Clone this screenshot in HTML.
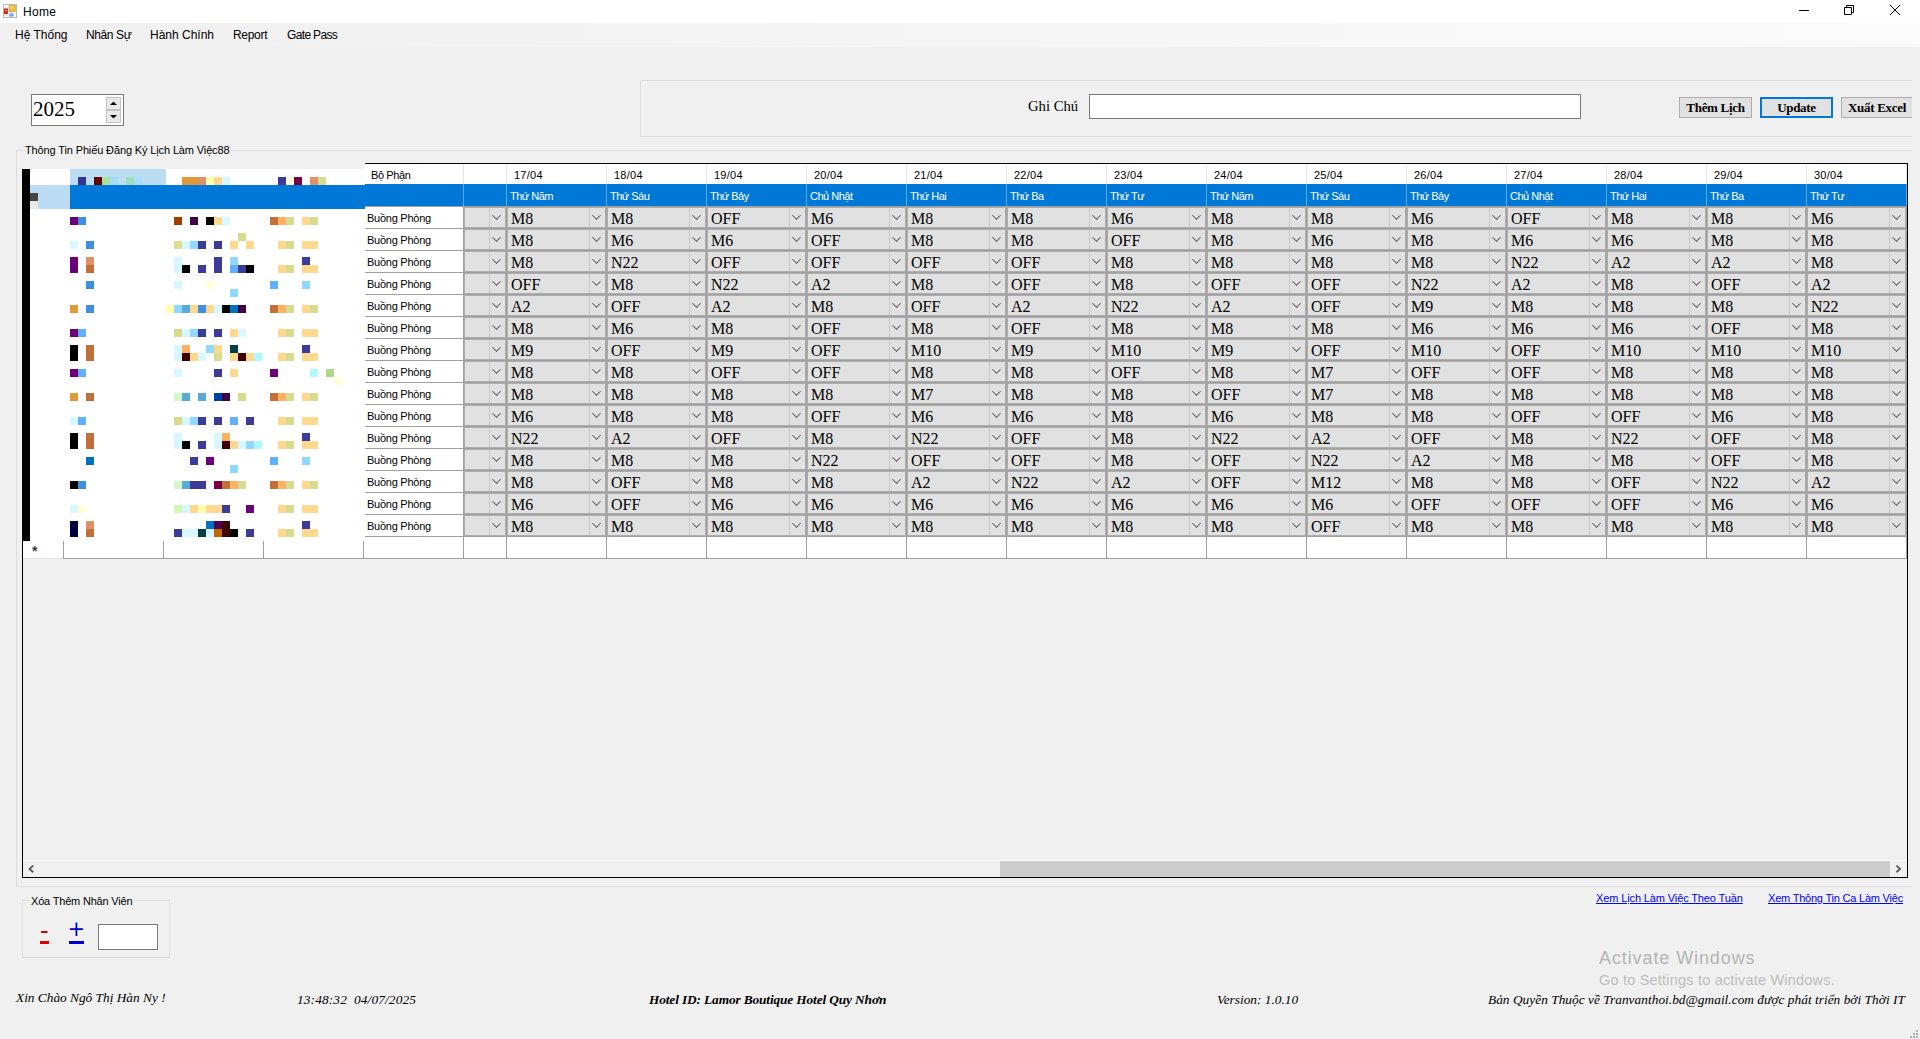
<!DOCTYPE html>
<html lang="vi"><head><meta charset="utf-8"><title>Home</title>
<style>
html,body{margin:0;padding:0}
body{width:1920px;height:1039px;background:#f0f0f0;position:relative;overflow:hidden;font-family:"Liberation Sans",sans-serif;font-size:11px;color:#000;line-height:1}
div,span,b,i,a{box-sizing:border-box}
.a{position:absolute;white-space:nowrap}
#title{position:absolute;left:0;top:0;width:1920px;height:23px;background:#fff}
#title .t{position:absolute;left:23px;top:6px;font-size:12px;}
#menu{position:absolute;left:0;top:23px;width:1920px;height:24px;background:linear-gradient(to right,#f0f0f0,#fbfbfb)}
#menu span{position:absolute;top:6px;font-size:12px;white-space:nowrap}
.ser{font-family:"Liberation Serif",serif}
.gb{position:absolute;border:1px solid #dcdcdc}
.gbc{position:absolute;background:#f0f0f0;font-size:11px;white-space:nowrap;padding:0 2px}
.tb{position:absolute;background:#fff;border:1px solid #7a7a7a}
.btn{position:absolute;background:#e1e1e1;border:1px solid #adadad;font-family:"Liberation Serif",serif;font-weight:bold;font-size:13px;text-align:center;white-space:nowrap;letter-spacing:-0.3px}
/* grid */
#grid{position:absolute;left:0;top:0;width:1920px;height:1039px}
#frame{left:22px;top:163px;width:1886px;height:715px;border:1px solid #000}
#grid>div{position:absolute}
.hdr{top:164px;height:20px;background:#fff;border-right:1px solid #e5e5e5;font-size:11px;padding:6px 0 0 7px;white-space:nowrap}
.sel{top:184px;height:23px;background:#0078d7;border-bottom:1px solid #a0a0a0}
.selv{top:184px;width:1px;height:22px;background:#5aa7e6}
.selt{top:185px;height:21px;color:#fff;font-size:11px;padding:6px 0 0 3px;white-space:nowrap;letter-spacing:-.5px}
.row{left:23px;width:1884px;height:22px;border-bottom:1px solid #a0a0a0;background:#fff}
.row>div{position:absolute;top:0;height:21px}
.bp{left:341px;width:100px;border-right:1px solid #a0a0a0;font-size:11px;padding:6px 0 0 3px;white-space:nowrap;letter-spacing:-.25px}
.c{width:99px;background:#e1e1e1;border:1px solid #adadad;font-family:"Liberation Serif",serif;font-size:16px;padding:3px 0 0 3px;white-space:nowrap;box-shadow:1px 0 0 #a0a0a0}
.c0{left:441px;width:42px}
.c::before{content:"";position:absolute;right:15px;top:0;width:1px;height:19px;background:#c9c9c9}
.c::after{content:"";position:absolute;right:5px;top:4px;width:6px;height:6px;border-right:1px solid #444;border-bottom:1px solid #444;transform:rotate(45deg) scale(.88)}
.newrow{left:23px;top:537px;width:1884px;height:22px;background:#fff;border-bottom:1px solid #a0a0a0}
.newrow i{position:absolute;top:0;width:1px;height:21px;background:#a0a0a0}
.star{position:absolute;left:9px;top:7px;font-size:14px;font-weight:bold;color:#3a3a3a}
#mosaic{left:22px;top:169px;width:343px;height:372px;background:#fff;overflow:hidden}
#mosaic b{position:absolute;display:block}
.lnk{position:absolute;color:#0000ff;text-decoration:underline;font-size:11px;white-space:nowrap}
.st{position:absolute;font-family:"Liberation Serif",serif;font-style:italic;font-size:13.33px;white-space:nowrap}
.mtop{left:22px;top:161px;width:343px;height:8px;background:#f0f0f0}

</style></head>
<body>
<div id="title">
<svg class="a" style="left:3px;top:4px" width="14" height="14" viewBox="0 0 14 14"><rect x="0.5" y="0.5" width="13" height="13" fill="#fff" stroke="#b8b8b8"/><path d="M5.6 1V13M5.6 8.6H13M1 11.4H5.6M1 4H5.6" stroke="#dcdcdc" stroke-width="0.8" fill="none"/><rect x="1" y="4.5" width="3.9" height="5.6" fill="#c8281e"/><rect x="2.2" y="5.8" width="1.4" height="1.5" fill="#f7b8a8"/><rect x="6.5" y="1.4" width="5.8" height="6.2" fill="#f0be2c" stroke="#c99c24" stroke-width="0.6"/><rect x="7.3" y="2.2" width="3" height="2.4" fill="#f9dc6a"/><rect x="6.5" y="9.5" width="4" height="3" fill="#4f8fe6"/><rect x="7.2" y="10.2" width="2.6" height="1.3" fill="#8cb8f0"/></svg>
<span class="t" style="letter-spacing:.3px">Home</span>
<svg class="a" style="left:1799px;top:5px" width="102" height="11" viewBox="0 0 102 11"><path d="M0 5.5H10" stroke="#000" fill="none"/><path d="M45.5 2.5H52.5V9.5H45.5ZM47.5 2.5V0.5H54.5V7.5H52.5" stroke="#000" fill="none"/><path d="M91 0L101 10M101 0L91 10" stroke="#000" fill="none"/></svg>
</div>
<div id="menu"><span style="left:15px">Hệ Thống</span><span style="left:86px;letter-spacing:-.4px">Nhân Sự</span><span style="left:150px">Hành Chính</span><span style="left:233px;letter-spacing:-.3px">Report</span><span style="left:287px;letter-spacing:-.65px">Gate Pass</span></div>
<div class="tb" style="left:31px;top:94px;width:93px;height:32px"><span class="a ser" style="left:1px;top:4px;font-size:21px">2025</span>
<div class="a" style="left:74px;top:2px;width:15px;height:13px;background:#e9e9e9;border:1px solid #c4c4c4"></div><div class="a" style="left:74px;top:15px;width:15px;height:13px;background:#e9e9e9;border:1px solid #c4c4c4"></div>
<svg class="a" style="left:78px;top:6px" width="7" height="18" viewBox="0 0 7 18"><path d="M0 4L3.5 0.5L7 4Z M0 14L3.5 17.5L7 14Z" fill="#000"/></svg></div>
<div class="gb" style="left:640px;top:80px;width:1272px;height:57px;border-right:0"></div>
<span class="a ser" style="left:1028px;top:99px;font-size:14.67px">Ghi Chú</span>
<div class="tb" style="left:1089px;top:94px;width:492px;height:25px"></div>
<div class="btn" style="left:1679px;top:97px;width:73px;height:21px;padding-top:3px">Thêm Lịch</div>
<div class="btn" style="left:1760px;top:97px;width:73px;height:21px;padding-top:2px;border:2px solid #0078d7">Update</div>
<div class="btn" style="left:1841px;top:97px;width:71px;height:21px;padding-top:3px;border-right:0">Xuất Excel</div>
<div class="gb" style="left:16px;top:150px;width:1896px;height:737px;border-right:0"></div>
<span class="gbc" style="left:23px;top:145px;letter-spacing:-.13px">Thông Tin Phiếu Đăng Ký Lịch Làm Việc88</span>
<div id="grid">
<div id="frame"></div>
<div class="hdr" style="left:365px;width:99px;padding-left:6px;letter-spacing:-.4px">Bộ Phận</div><div class="hdr" style="left:464px;width:43px"></div><div class="hdr" style="left:507px;width:100px;letter-spacing:.25px">17/04</div><div class="hdr" style="left:607px;width:100px;letter-spacing:.25px">18/04</div><div class="hdr" style="left:707px;width:100px;letter-spacing:.25px">19/04</div><div class="hdr" style="left:807px;width:100px;letter-spacing:.25px">20/04</div><div class="hdr" style="left:907px;width:100px;letter-spacing:.25px">21/04</div><div class="hdr" style="left:1007px;width:100px;letter-spacing:.25px">22/04</div><div class="hdr" style="left:1107px;width:100px;letter-spacing:.25px">23/04</div><div class="hdr" style="left:1207px;width:100px;letter-spacing:.25px">24/04</div><div class="hdr" style="left:1307px;width:100px;letter-spacing:.25px">25/04</div><div class="hdr" style="left:1407px;width:100px;letter-spacing:.25px">26/04</div><div class="hdr" style="left:1507px;width:100px;letter-spacing:.25px">27/04</div><div class="hdr" style="left:1607px;width:100px;letter-spacing:.25px">28/04</div><div class="hdr" style="left:1707px;width:100px;letter-spacing:.25px">29/04</div><div class="hdr" style="left:1807px;width:100px;letter-spacing:.25px">30/04</div>
<div class="sel" style="left:23px;width:1884px"></div><div class="selv" style="left:463px"></div><div class="selv" style="left:506px"></div><div class="selt" style="left:507px">Thứ Năm</div><div class="selv" style="left:606px"></div><div class="selt" style="left:607px">Thứ Sáu</div><div class="selv" style="left:706px"></div><div class="selt" style="left:707px">Thứ Bảy</div><div class="selv" style="left:806px"></div><div class="selt" style="left:807px">Chủ Nhật</div><div class="selv" style="left:906px"></div><div class="selt" style="left:907px">Thứ Hai</div><div class="selv" style="left:1006px"></div><div class="selt" style="left:1007px">Thứ Ba</div><div class="selv" style="left:1106px"></div><div class="selt" style="left:1107px">Thứ Tư</div><div class="selv" style="left:1206px"></div><div class="selt" style="left:1207px">Thứ Năm</div><div class="selv" style="left:1306px"></div><div class="selt" style="left:1307px">Thứ Sáu</div><div class="selv" style="left:1406px"></div><div class="selt" style="left:1407px">Thứ Bảy</div><div class="selv" style="left:1506px"></div><div class="selt" style="left:1507px">Chủ Nhật</div><div class="selv" style="left:1606px"></div><div class="selt" style="left:1607px">Thứ Hai</div><div class="selv" style="left:1706px"></div><div class="selt" style="left:1707px">Thứ Ba</div><div class="selv" style="left:1806px"></div><div class="selt" style="left:1807px">Thứ Tư</div><div class="selv" style="left:1906px"></div>
<div class="row" style="top:207px"><div class="bp">Buồng Phòng</div><div class="c c0"></div><div class="c" style="left:484px">M8</div><div class="c" style="left:584px">M8</div><div class="c" style="left:684px">OFF</div><div class="c" style="left:784px">M6</div><div class="c" style="left:884px">M8</div><div class="c" style="left:984px">M8</div><div class="c" style="left:1084px">M6</div><div class="c" style="left:1184px">M8</div><div class="c" style="left:1284px">M8</div><div class="c" style="left:1384px">M6</div><div class="c" style="left:1484px">OFF</div><div class="c" style="left:1584px">M8</div><div class="c" style="left:1684px">M8</div><div class="c" style="left:1784px">M6</div></div>
<div class="row" style="top:229px"><div class="bp">Buồng Phòng</div><div class="c c0"></div><div class="c" style="left:484px">M8</div><div class="c" style="left:584px">M6</div><div class="c" style="left:684px">M6</div><div class="c" style="left:784px">OFF</div><div class="c" style="left:884px">M8</div><div class="c" style="left:984px">M8</div><div class="c" style="left:1084px">OFF</div><div class="c" style="left:1184px">M8</div><div class="c" style="left:1284px">M6</div><div class="c" style="left:1384px">M8</div><div class="c" style="left:1484px">M6</div><div class="c" style="left:1584px">M6</div><div class="c" style="left:1684px">M8</div><div class="c" style="left:1784px">M8</div></div>
<div class="row" style="top:251px"><div class="bp">Buồng Phòng</div><div class="c c0"></div><div class="c" style="left:484px">M8</div><div class="c" style="left:584px">N22</div><div class="c" style="left:684px">OFF</div><div class="c" style="left:784px">OFF</div><div class="c" style="left:884px">OFF</div><div class="c" style="left:984px">OFF</div><div class="c" style="left:1084px">M8</div><div class="c" style="left:1184px">M8</div><div class="c" style="left:1284px">M8</div><div class="c" style="left:1384px">M8</div><div class="c" style="left:1484px">N22</div><div class="c" style="left:1584px">A2</div><div class="c" style="left:1684px">A2</div><div class="c" style="left:1784px">M8</div></div>
<div class="row" style="top:273px"><div class="bp">Buồng Phòng</div><div class="c c0"></div><div class="c" style="left:484px">OFF</div><div class="c" style="left:584px">M8</div><div class="c" style="left:684px">N22</div><div class="c" style="left:784px">A2</div><div class="c" style="left:884px">M8</div><div class="c" style="left:984px">OFF</div><div class="c" style="left:1084px">M8</div><div class="c" style="left:1184px">OFF</div><div class="c" style="left:1284px">OFF</div><div class="c" style="left:1384px">N22</div><div class="c" style="left:1484px">A2</div><div class="c" style="left:1584px">M8</div><div class="c" style="left:1684px">OFF</div><div class="c" style="left:1784px">A2</div></div>
<div class="row" style="top:295px"><div class="bp">Buồng Phòng</div><div class="c c0"></div><div class="c" style="left:484px">A2</div><div class="c" style="left:584px">OFF</div><div class="c" style="left:684px">A2</div><div class="c" style="left:784px">M8</div><div class="c" style="left:884px">OFF</div><div class="c" style="left:984px">A2</div><div class="c" style="left:1084px">N22</div><div class="c" style="left:1184px">A2</div><div class="c" style="left:1284px">OFF</div><div class="c" style="left:1384px">M9</div><div class="c" style="left:1484px">M8</div><div class="c" style="left:1584px">M8</div><div class="c" style="left:1684px">M8</div><div class="c" style="left:1784px">N22</div></div>
<div class="row" style="top:317px"><div class="bp">Buồng Phòng</div><div class="c c0"></div><div class="c" style="left:484px">M8</div><div class="c" style="left:584px">M6</div><div class="c" style="left:684px">M8</div><div class="c" style="left:784px">OFF</div><div class="c" style="left:884px">M8</div><div class="c" style="left:984px">OFF</div><div class="c" style="left:1084px">M8</div><div class="c" style="left:1184px">M8</div><div class="c" style="left:1284px">M8</div><div class="c" style="left:1384px">M6</div><div class="c" style="left:1484px">M6</div><div class="c" style="left:1584px">M6</div><div class="c" style="left:1684px">OFF</div><div class="c" style="left:1784px">M8</div></div>
<div class="row" style="top:339px"><div class="bp">Buồng Phòng</div><div class="c c0"></div><div class="c" style="left:484px">M9</div><div class="c" style="left:584px">OFF</div><div class="c" style="left:684px">M9</div><div class="c" style="left:784px">OFF</div><div class="c" style="left:884px">M10</div><div class="c" style="left:984px">M9</div><div class="c" style="left:1084px">M10</div><div class="c" style="left:1184px">M9</div><div class="c" style="left:1284px">OFF</div><div class="c" style="left:1384px">M10</div><div class="c" style="left:1484px">OFF</div><div class="c" style="left:1584px">M10</div><div class="c" style="left:1684px">M10</div><div class="c" style="left:1784px">M10</div></div>
<div class="row" style="top:361px"><div class="bp">Buồng Phòng</div><div class="c c0"></div><div class="c" style="left:484px">M8</div><div class="c" style="left:584px">M8</div><div class="c" style="left:684px">OFF</div><div class="c" style="left:784px">OFF</div><div class="c" style="left:884px">M8</div><div class="c" style="left:984px">M8</div><div class="c" style="left:1084px">OFF</div><div class="c" style="left:1184px">M8</div><div class="c" style="left:1284px">M7</div><div class="c" style="left:1384px">OFF</div><div class="c" style="left:1484px">OFF</div><div class="c" style="left:1584px">M8</div><div class="c" style="left:1684px">M8</div><div class="c" style="left:1784px">M8</div></div>
<div class="row" style="top:383px"><div class="bp">Buồng Phòng</div><div class="c c0"></div><div class="c" style="left:484px">M8</div><div class="c" style="left:584px">M8</div><div class="c" style="left:684px">M8</div><div class="c" style="left:784px">M8</div><div class="c" style="left:884px">M7</div><div class="c" style="left:984px">M8</div><div class="c" style="left:1084px">M8</div><div class="c" style="left:1184px">OFF</div><div class="c" style="left:1284px">M7</div><div class="c" style="left:1384px">M8</div><div class="c" style="left:1484px">M8</div><div class="c" style="left:1584px">M8</div><div class="c" style="left:1684px">M8</div><div class="c" style="left:1784px">M8</div></div>
<div class="row" style="top:405px"><div class="bp">Buồng Phòng</div><div class="c c0"></div><div class="c" style="left:484px">M6</div><div class="c" style="left:584px">M8</div><div class="c" style="left:684px">M8</div><div class="c" style="left:784px">OFF</div><div class="c" style="left:884px">M6</div><div class="c" style="left:984px">M6</div><div class="c" style="left:1084px">M8</div><div class="c" style="left:1184px">M6</div><div class="c" style="left:1284px">M8</div><div class="c" style="left:1384px">M8</div><div class="c" style="left:1484px">OFF</div><div class="c" style="left:1584px">OFF</div><div class="c" style="left:1684px">M6</div><div class="c" style="left:1784px">M8</div></div>
<div class="row" style="top:427px"><div class="bp">Buồng Phòng</div><div class="c c0"></div><div class="c" style="left:484px">N22</div><div class="c" style="left:584px">A2</div><div class="c" style="left:684px">OFF</div><div class="c" style="left:784px">M8</div><div class="c" style="left:884px">N22</div><div class="c" style="left:984px">OFF</div><div class="c" style="left:1084px">M8</div><div class="c" style="left:1184px">N22</div><div class="c" style="left:1284px">A2</div><div class="c" style="left:1384px">OFF</div><div class="c" style="left:1484px">M8</div><div class="c" style="left:1584px">N22</div><div class="c" style="left:1684px">OFF</div><div class="c" style="left:1784px">M8</div></div>
<div class="row" style="top:449px"><div class="bp">Buồng Phòng</div><div class="c c0"></div><div class="c" style="left:484px">M8</div><div class="c" style="left:584px">M8</div><div class="c" style="left:684px">M8</div><div class="c" style="left:784px">N22</div><div class="c" style="left:884px">OFF</div><div class="c" style="left:984px">OFF</div><div class="c" style="left:1084px">M8</div><div class="c" style="left:1184px">OFF</div><div class="c" style="left:1284px">N22</div><div class="c" style="left:1384px">A2</div><div class="c" style="left:1484px">M8</div><div class="c" style="left:1584px">M8</div><div class="c" style="left:1684px">OFF</div><div class="c" style="left:1784px">M8</div></div>
<div class="row" style="top:471px"><div class="bp">Buồng Phòng</div><div class="c c0"></div><div class="c" style="left:484px">M8</div><div class="c" style="left:584px">OFF</div><div class="c" style="left:684px">M8</div><div class="c" style="left:784px">M8</div><div class="c" style="left:884px">A2</div><div class="c" style="left:984px">N22</div><div class="c" style="left:1084px">A2</div><div class="c" style="left:1184px">OFF</div><div class="c" style="left:1284px">M12</div><div class="c" style="left:1384px">M8</div><div class="c" style="left:1484px">M8</div><div class="c" style="left:1584px">OFF</div><div class="c" style="left:1684px">N22</div><div class="c" style="left:1784px">A2</div></div>
<div class="row" style="top:493px"><div class="bp">Buồng Phòng</div><div class="c c0"></div><div class="c" style="left:484px">M6</div><div class="c" style="left:584px">OFF</div><div class="c" style="left:684px">M6</div><div class="c" style="left:784px">M6</div><div class="c" style="left:884px">M6</div><div class="c" style="left:984px">M6</div><div class="c" style="left:1084px">M6</div><div class="c" style="left:1184px">M6</div><div class="c" style="left:1284px">M6</div><div class="c" style="left:1384px">OFF</div><div class="c" style="left:1484px">OFF</div><div class="c" style="left:1584px">OFF</div><div class="c" style="left:1684px">M6</div><div class="c" style="left:1784px">M6</div></div>
<div class="row" style="top:515px"><div class="bp">Buồng Phòng</div><div class="c c0"></div><div class="c" style="left:484px">M8</div><div class="c" style="left:584px">M8</div><div class="c" style="left:684px">M8</div><div class="c" style="left:784px">M8</div><div class="c" style="left:884px">M8</div><div class="c" style="left:984px">M8</div><div class="c" style="left:1084px">M8</div><div class="c" style="left:1184px">M8</div><div class="c" style="left:1284px">OFF</div><div class="c" style="left:1384px">M8</div><div class="c" style="left:1484px">M8</div><div class="c" style="left:1584px">M8</div><div class="c" style="left:1684px">M8</div><div class="c" style="left:1784px">M8</div></div>
<div class="newrow"><span class="star">*</span><i style="left:0;top:21px;width:40px;height:1px;background:#e6e6e6"></i><i style="left:40px"></i><i style="left:140px"></i><i style="left:240px"></i><i style="left:340px"></i><i style="left:440px"></i><i style="left:483px"></i><i style="left:583px"></i><i style="left:683px"></i><i style="left:783px"></i><i style="left:883px"></i><i style="left:983px"></i><i style="left:1083px"></i><i style="left:1183px"></i><i style="left:1283px"></i><i style="left:1383px"></i><i style="left:1483px"></i><i style="left:1583px"></i><i style="left:1683px"></i><i style="left:1783px"></i><i style="left:1883px"></i></div>
<div class="mtop"></div><div id="mosaic"><b style="left:0px;top:0px;width:8px;height:372px;background:#000"></b><b style="left:48px;top:0px;width:96px;height:16px;background:#bcdcf4"></b><b style="left:8px;top:16px;width:40px;height:24px;background:#bcdcf4"></b><b style="left:48px;top:16px;width:295px;height:24px;background:#0078d7"></b><b style="left:56px;top:8px;width:8px;height:8px;background:#333399"></b><b style="left:72px;top:8px;width:8px;height:8px;background:#600000"></b><b style="left:80px;top:8px;width:8px;height:8px;background:#a8e0a0"></b><b style="left:88px;top:8px;width:8px;height:8px;background:#a0dcf8"></b><b style="left:104px;top:8px;width:8px;height:8px;background:#a0dcc0"></b><b style="left:112px;top:8px;width:8px;height:8px;background:#a8dcf8"></b><b style="left:160px;top:8px;width:16px;height:8px;background:#e09838"></b><b style="left:176px;top:8px;width:8px;height:8px;background:#e09068"></b><b style="left:184px;top:8px;width:8px;height:8px;background:#ffffb0"></b><b style="left:192px;top:8px;width:8px;height:8px;background:#ffd890"></b><b style="left:200px;top:8px;width:8px;height:8px;background:#d8f8ff"></b><b style="left:256px;top:8px;width:8px;height:8px;background:#3c3c98"></b><b style="left:264px;top:8px;width:8px;height:8px;background:#ffffe0"></b><b style="left:272px;top:8px;width:8px;height:8px;background:#780040"></b><b style="left:288px;top:8px;width:8px;height:8px;background:#e09068"></b><b style="left:296px;top:8px;width:8px;height:8px;background:#d8dc90"></b><b style="left:8px;top:24px;width:8px;height:8px;background:#444444"></b><b style="left:8px;top:32px;width:8px;height:8px;background:#e8e8e8"></b><b style="left:48px;top:48px;width:8px;height:8px;background:#6c0078"></b><b style="left:56px;top:48px;width:8px;height:8px;background:#4090e0"></b><b style="left:152px;top:48px;width:8px;height:8px;background:#a04000"></b><b style="left:168px;top:48px;width:8px;height:8px;background:#400048"></b><b style="left:184px;top:48px;width:8px;height:8px;background:#000000"></b><b style="left:192px;top:48px;width:8px;height:8px;background:#ffd890"></b><b style="left:200px;top:48px;width:8px;height:8px;background:#d8f8ff"></b><b style="left:248px;top:48px;width:8px;height:8px;background:#c07038"></b><b style="left:256px;top:48px;width:8px;height:8px;background:#ffb060"></b><b style="left:264px;top:48px;width:8px;height:8px;background:#d8dc90"></b><b style="left:280px;top:48px;width:8px;height:8px;background:#ffd890"></b><b style="left:288px;top:48px;width:8px;height:8px;background:#d8dc90"></b><b style="left:216px;top:64px;width:8px;height:8px;background:#d8dc90"></b><b style="left:48px;top:72px;width:8px;height:8px;background:#d8f8ff"></b><b style="left:64px;top:72px;width:8px;height:8px;background:#4090e0"></b><b style="left:152px;top:72px;width:8px;height:8px;background:#e0dc90"></b><b style="left:160px;top:72px;width:8px;height:8px;background:#d8f8ff"></b><b style="left:168px;top:72px;width:8px;height:8px;background:#90d8ff"></b><b style="left:176px;top:72px;width:8px;height:8px;background:#3c3c98"></b><b style="left:192px;top:72px;width:8px;height:8px;background:#3c3c98"></b><b style="left:208px;top:72px;width:8px;height:8px;background:#ffd890"></b><b style="left:224px;top:72px;width:8px;height:8px;background:#ffd890"></b><b style="left:256px;top:72px;width:8px;height:8px;background:#ffd890"></b><b style="left:264px;top:72px;width:8px;height:8px;background:#d8dc90"></b><b style="left:280px;top:72px;width:16px;height:8px;background:#ffd890"></b><b style="left:48px;top:88px;width:8px;height:8px;background:#6c0078"></b><b style="left:64px;top:88px;width:8px;height:8px;background:#e09068"></b><b style="left:152px;top:88px;width:8px;height:8px;background:#d8f8ff"></b><b style="left:192px;top:88px;width:8px;height:8px;background:#3c3c98"></b><b style="left:208px;top:88px;width:8px;height:8px;background:#90d8ff"></b><b style="left:280px;top:88px;width:8px;height:8px;background:#3c3c98"></b><b style="left:48px;top:96px;width:8px;height:8px;background:#6c0078"></b><b style="left:64px;top:96px;width:8px;height:8px;background:#c07038"></b><b style="left:152px;top:96px;width:8px;height:8px;background:#d8f8ff"></b><b style="left:160px;top:96px;width:8px;height:8px;background:#000000"></b><b style="left:176px;top:96px;width:8px;height:8px;background:#3c3c98"></b><b style="left:192px;top:96px;width:8px;height:8px;background:#3c3c98"></b><b style="left:208px;top:96px;width:8px;height:8px;background:#60b0ff"></b><b style="left:216px;top:96px;width:8px;height:8px;background:#3c3c98"></b><b style="left:224px;top:96px;width:8px;height:8px;background:#000000"></b><b style="left:256px;top:96px;width:8px;height:8px;background:#ffd890"></b><b style="left:264px;top:96px;width:8px;height:8px;background:#d8dc90"></b><b style="left:280px;top:96px;width:16px;height:8px;background:#ffd890"></b><b style="left:64px;top:112px;width:8px;height:8px;background:#4090e0"></b><b style="left:152px;top:112px;width:8px;height:8px;background:#d8f8ff"></b><b style="left:184px;top:112px;width:8px;height:8px;background:#ffffd8"></b><b style="left:248px;top:112px;width:8px;height:8px;background:#60b0ff"></b><b style="left:280px;top:112px;width:8px;height:8px;background:#90d8ff"></b><b style="left:208px;top:120px;width:8px;height:8px;background:#90d8ff"></b><b style="left:48px;top:136px;width:8px;height:8px;background:#e09838"></b><b style="left:64px;top:136px;width:8px;height:8px;background:#4090e0"></b><b style="left:144px;top:136px;width:8px;height:8px;background:#ffffb0"></b><b style="left:152px;top:136px;width:8px;height:8px;background:#90d8ff"></b><b style="left:160px;top:136px;width:8px;height:8px;background:#58acd8"></b><b style="left:168px;top:136px;width:8px;height:8px;background:#ffd890"></b><b style="left:176px;top:136px;width:8px;height:8px;background:#4090e0"></b><b style="left:184px;top:136px;width:8px;height:8px;background:#ffd890"></b><b style="left:192px;top:136px;width:8px;height:8px;background:#d8f8ff"></b><b style="left:200px;top:136px;width:8px;height:8px;background:#000000"></b><b style="left:208px;top:136px;width:8px;height:8px;background:#0070c0"></b><b style="left:216px;top:136px;width:8px;height:8px;background:#400048"></b><b style="left:248px;top:136px;width:8px;height:8px;background:#c07038"></b><b style="left:256px;top:136px;width:8px;height:8px;background:#ffb060"></b><b style="left:264px;top:136px;width:8px;height:8px;background:#d8dc90"></b><b style="left:280px;top:136px;width:8px;height:8px;background:#ffd890"></b><b style="left:288px;top:136px;width:8px;height:8px;background:#d8dc90"></b><b style="left:48px;top:160px;width:8px;height:8px;background:#6c0078"></b><b style="left:56px;top:160px;width:8px;height:8px;background:#60b0ff"></b><b style="left:152px;top:160px;width:8px;height:8px;background:#d8dc90"></b><b style="left:160px;top:160px;width:8px;height:8px;background:#d8f8ff"></b><b style="left:168px;top:160px;width:8px;height:8px;background:#90d8ff"></b><b style="left:176px;top:160px;width:8px;height:8px;background:#3c3c98"></b><b style="left:192px;top:160px;width:8px;height:8px;background:#3c3c98"></b><b style="left:208px;top:160px;width:8px;height:8px;background:#ffd890"></b><b style="left:216px;top:160px;width:8px;height:8px;background:#d8f8ff"></b><b style="left:256px;top:160px;width:8px;height:8px;background:#ffd890"></b><b style="left:264px;top:160px;width:8px;height:8px;background:#d8dc90"></b><b style="left:280px;top:160px;width:16px;height:8px;background:#ffd890"></b><b style="left:48px;top:176px;width:8px;height:8px;background:#000000"></b><b style="left:64px;top:176px;width:8px;height:8px;background:#c07038"></b><b style="left:152px;top:176px;width:8px;height:8px;background:#d8f8ff"></b><b style="left:160px;top:176px;width:8px;height:8px;background:#ffb060"></b><b style="left:184px;top:176px;width:8px;height:8px;background:#90d8ff"></b><b style="left:192px;top:176px;width:8px;height:8px;background:#ffd890"></b><b style="left:208px;top:176px;width:8px;height:8px;background:#004040"></b><b style="left:280px;top:176px;width:8px;height:8px;background:#3c3c98"></b><b style="left:48px;top:184px;width:8px;height:8px;background:#000000"></b><b style="left:64px;top:184px;width:8px;height:8px;background:#c07038"></b><b style="left:152px;top:184px;width:8px;height:8px;background:#d8f8ff"></b><b style="left:160px;top:184px;width:8px;height:8px;background:#400000"></b><b style="left:168px;top:184px;width:8px;height:8px;background:#ffd890"></b><b style="left:176px;top:184px;width:8px;height:8px;background:#d8f8ff"></b><b style="left:192px;top:184px;width:8px;height:8px;background:#d8dc90"></b><b style="left:208px;top:184px;width:8px;height:8px;background:#ffd890"></b><b style="left:216px;top:184px;width:8px;height:8px;background:#400000"></b><b style="left:224px;top:184px;width:8px;height:8px;background:#ffd890"></b><b style="left:232px;top:184px;width:8px;height:8px;background:#b0f8ff"></b><b style="left:256px;top:184px;width:8px;height:8px;background:#ffd890"></b><b style="left:264px;top:184px;width:8px;height:8px;background:#d8dc90"></b><b style="left:280px;top:184px;width:16px;height:8px;background:#ffd890"></b><b style="left:48px;top:200px;width:8px;height:8px;background:#6c0078"></b><b style="left:56px;top:200px;width:8px;height:8px;background:#60b0ff"></b><b style="left:152px;top:200px;width:8px;height:8px;background:#d8f8ff"></b><b style="left:192px;top:200px;width:8px;height:8px;background:#3c3c98"></b><b style="left:208px;top:200px;width:8px;height:8px;background:#ffd890"></b><b style="left:248px;top:200px;width:8px;height:8px;background:#6c0078"></b><b style="left:288px;top:200px;width:8px;height:8px;background:#b0f8ff"></b><b style="left:304px;top:200px;width:8px;height:8px;background:#b0d888"></b><b style="left:312px;top:208px;width:8px;height:8px;background:#ffffd8"></b><b style="left:48px;top:224px;width:8px;height:8px;background:#e09838"></b><b style="left:64px;top:224px;width:8px;height:8px;background:#c07038"></b><b style="left:152px;top:224px;width:8px;height:8px;background:#d0f8c8"></b><b style="left:160px;top:224px;width:8px;height:8px;background:#58acd8"></b><b style="left:176px;top:224px;width:8px;height:8px;background:#58acd8"></b><b style="left:192px;top:224px;width:8px;height:8px;background:#0040a0"></b><b style="left:200px;top:224px;width:8px;height:8px;background:#400048"></b><b style="left:216px;top:224px;width:8px;height:8px;background:#d8dc90"></b><b style="left:248px;top:224px;width:8px;height:8px;background:#c07038"></b><b style="left:256px;top:224px;width:8px;height:8px;background:#ffb060"></b><b style="left:264px;top:224px;width:8px;height:8px;background:#d8dc90"></b><b style="left:280px;top:224px;width:8px;height:8px;background:#ffd890"></b><b style="left:288px;top:224px;width:8px;height:8px;background:#d8dc90"></b><b style="left:48px;top:248px;width:8px;height:8px;background:#d8f8ff"></b><b style="left:56px;top:248px;width:8px;height:8px;background:#60b0ff"></b><b style="left:152px;top:248px;width:8px;height:8px;background:#d8dc90"></b><b style="left:160px;top:248px;width:8px;height:8px;background:#d8f8ff"></b><b style="left:168px;top:248px;width:8px;height:8px;background:#90d8ff"></b><b style="left:176px;top:248px;width:8px;height:8px;background:#3c3c98"></b><b style="left:192px;top:248px;width:8px;height:8px;background:#3c3c98"></b><b style="left:208px;top:248px;width:8px;height:8px;background:#60b0ff"></b><b style="left:224px;top:248px;width:8px;height:8px;background:#3c3c98"></b><b style="left:256px;top:248px;width:8px;height:8px;background:#ffd890"></b><b style="left:264px;top:248px;width:8px;height:8px;background:#d8dc90"></b><b style="left:280px;top:248px;width:16px;height:8px;background:#ffd890"></b><b style="left:48px;top:264px;width:8px;height:8px;background:#000000"></b><b style="left:64px;top:264px;width:8px;height:8px;background:#c07038"></b><b style="left:152px;top:264px;width:8px;height:8px;background:#d8f8ff"></b><b style="left:192px;top:264px;width:8px;height:8px;background:#d8f8ff"></b><b style="left:200px;top:264px;width:8px;height:8px;background:#ffb060"></b><b style="left:280px;top:264px;width:8px;height:8px;background:#3c3c98"></b><b style="left:48px;top:272px;width:8px;height:8px;background:#000000"></b><b style="left:64px;top:272px;width:8px;height:8px;background:#c07038"></b><b style="left:152px;top:272px;width:8px;height:8px;background:#d8f8ff"></b><b style="left:160px;top:272px;width:8px;height:8px;background:#000000"></b><b style="left:176px;top:272px;width:8px;height:8px;background:#3c3c98"></b><b style="left:192px;top:272px;width:8px;height:8px;background:#d8f8ff"></b><b style="left:200px;top:272px;width:8px;height:8px;background:#400000"></b><b style="left:208px;top:272px;width:8px;height:8px;background:#ffd890"></b><b style="left:216px;top:272px;width:8px;height:8px;background:#d8f8ff"></b><b style="left:224px;top:272px;width:8px;height:8px;background:#90d8ff"></b><b style="left:232px;top:272px;width:8px;height:8px;background:#b0f8ff"></b><b style="left:256px;top:272px;width:8px;height:8px;background:#ffd890"></b><b style="left:264px;top:272px;width:8px;height:8px;background:#d8dc90"></b><b style="left:280px;top:272px;width:16px;height:8px;background:#ffd890"></b><b style="left:64px;top:288px;width:8px;height:8px;background:#0070c0"></b><b style="left:168px;top:288px;width:8px;height:8px;background:#3c3c98"></b><b style="left:184px;top:288px;width:8px;height:8px;background:#6c0078"></b><b style="left:248px;top:288px;width:8px;height:8px;background:#60b0ff"></b><b style="left:280px;top:288px;width:8px;height:8px;background:#90d8ff"></b><b style="left:208px;top:296px;width:8px;height:8px;background:#90d8ff"></b><b style="left:48px;top:312px;width:8px;height:8px;background:#000000"></b><b style="left:56px;top:312px;width:8px;height:8px;background:#4090e0"></b><b style="left:152px;top:312px;width:8px;height:8px;background:#d0f8c8"></b><b style="left:160px;top:312px;width:8px;height:8px;background:#58acd8"></b><b style="left:168px;top:312px;width:16px;height:8px;background:#3c3c98"></b><b style="left:192px;top:312px;width:8px;height:8px;background:#780040"></b><b style="left:200px;top:312px;width:8px;height:8px;background:#c07038"></b><b style="left:208px;top:312px;width:8px;height:8px;background:#ffb060"></b><b style="left:216px;top:312px;width:8px;height:8px;background:#d8dc90"></b><b style="left:248px;top:312px;width:8px;height:8px;background:#c07038"></b><b style="left:256px;top:312px;width:8px;height:8px;background:#ffb060"></b><b style="left:264px;top:312px;width:8px;height:8px;background:#d8dc90"></b><b style="left:280px;top:312px;width:8px;height:8px;background:#ffd890"></b><b style="left:288px;top:312px;width:8px;height:8px;background:#d8dc90"></b><b style="left:48px;top:336px;width:8px;height:8px;background:#d8f8ff"></b><b style="left:56px;top:336px;width:8px;height:8px;background:#ffffd8"></b><b style="left:152px;top:336px;width:8px;height:8px;background:#d0f8b0"></b><b style="left:160px;top:336px;width:8px;height:8px;background:#d8f8ff"></b><b style="left:168px;top:336px;width:8px;height:8px;background:#ffd890"></b><b style="left:176px;top:336px;width:8px;height:8px;background:#ffffb0"></b><b style="left:184px;top:336px;width:16px;height:8px;background:#ffd890"></b><b style="left:200px;top:336px;width:8px;height:8px;background:#3c3c98"></b><b style="left:224px;top:336px;width:8px;height:8px;background:#6c0078"></b><b style="left:256px;top:336px;width:8px;height:8px;background:#ffd890"></b><b style="left:264px;top:336px;width:8px;height:8px;background:#d8dc90"></b><b style="left:280px;top:336px;width:16px;height:8px;background:#ffd890"></b><b style="left:48px;top:352px;width:8px;height:8px;background:#000040"></b><b style="left:64px;top:352px;width:8px;height:8px;background:#e09068"></b><b style="left:184px;top:352px;width:8px;height:8px;background:#0070c0"></b><b style="left:192px;top:352px;width:8px;height:8px;background:#500050"></b><b style="left:200px;top:352px;width:8px;height:8px;background:#400000"></b><b style="left:280px;top:352px;width:8px;height:8px;background:#3c3c98"></b><b style="left:48px;top:360px;width:8px;height:8px;background:#000040"></b><b style="left:64px;top:360px;width:8px;height:8px;background:#c07038"></b><b style="left:152px;top:360px;width:8px;height:8px;background:#3c3c98"></b><b style="left:160px;top:360px;width:16px;height:8px;background:#d8f8ff"></b><b style="left:176px;top:360px;width:8px;height:8px;background:#004040"></b><b style="left:184px;top:360px;width:8px;height:8px;background:#d8f8ff"></b><b style="left:192px;top:360px;width:8px;height:8px;background:#c06800"></b><b style="left:200px;top:360px;width:8px;height:8px;background:#400000"></b><b style="left:208px;top:360px;width:8px;height:8px;background:#000000"></b><b style="left:224px;top:360px;width:8px;height:8px;background:#3c3c98"></b><b style="left:256px;top:360px;width:8px;height:8px;background:#ffd890"></b><b style="left:264px;top:360px;width:8px;height:8px;background:#d8dc90"></b><b style="left:280px;top:360px;width:16px;height:8px;background:#ffd890"></b></div>
<div id="hs" style="left:23px;top:860px;width:1884px;height:17px;background:#f0f0f0;border-top:1px solid #fff">
<svg class="a" style="left:5px;top:4px" width="7" height="8" viewBox="0 0 7 8"><path d="M5.2 0.6L1.6 3.9L5.2 7.2" stroke="#5a5a5a" stroke-width="1.9" fill="none"/></svg>
<div class="a" style="left:977px;top:0;width:890px;height:16px;background:#cdcdcd"></div>
<svg class="a" style="left:1872px;top:4px" width="7" height="8" viewBox="0 0 7 8"><path d="M1.4 0.6L5 3.9L1.4 7.2" stroke="#5a5a5a" stroke-width="1.9" fill="none"/></svg>
</div>
</div>
<div class="gb" style="left:22px;top:900px;width:148px;height:58px"></div>
<span class="gbc" style="left:29px;top:896px;letter-spacing:-.19px">Xóa Thêm Nhân Viên</span>
<span class="a" style="left:40px;top:917px;font-size:26px;color:#c80000">-</span><div class="a" style="left:40px;top:941px;width:9px;height:3px;background:#e00000"></div>
<span class="a" style="left:67.5px;top:919px;font-size:21px;font-family:'DejaVu Sans',sans-serif;color:#0000d0">+</span><div class="a" style="left:69px;top:941px;width:15px;height:3px;background:#0000d0"></div>
<div class="tb" style="left:98px;top:924px;width:60px;height:26px"></div>
<a class="lnk" style="left:1596px;top:893px;letter-spacing:-.12px">Xem Lịch Làm Việc Theo Tuần</a>
<a class="lnk" style="left:1768px;top:893px;letter-spacing:-.21px">Xem Thông Tin Ca Làm Việc</a>
<span class="a" style="left:1599px;top:949px;font-size:18px;letter-spacing:.9px;color:#b4b4b4">Activate Windows</span>
<span class="a" style="left:1599px;top:973px;font-size:14.5px;letter-spacing:.2px;color:#bcbcbc">Go to Settings to activate Windows.</span>
<span class="st" style="left:16px;top:991px">Xin Chào Ngô Thị Hàn Ny !</span>
<span class="st" style="left:297px;top:993px;letter-spacing:.14px">13:48:32&nbsp; 04/07/2025</span>
<span class="st" style="left:649px;top:993px;font-weight:bold;letter-spacing:-.12px">Hotel ID: Lamor Boutique Hotel Quy Nhơn</span>
<span class="st" style="left:1217px;top:993px">Version: 1.0.10</span>
<span class="st" style="left:1488px;top:993px;letter-spacing:.03px">Bản Quyền Thuộc về Tranvanthoi.bd@gmail.com được phát triển bởi Thời IT</span>
<svg class="a" style="left:1910px;top:1030px" width="8" height="8" viewBox="0 0 8 8"><path d="M6 0h2v2h-2zM3 3h2v2h-2zM6 3h2v2h-2zM0 6h2v2h-2zM3 6h2v2h-2zM6 6h2v2h-2z" fill="#b0b0b0"/></svg>
</body></html>
